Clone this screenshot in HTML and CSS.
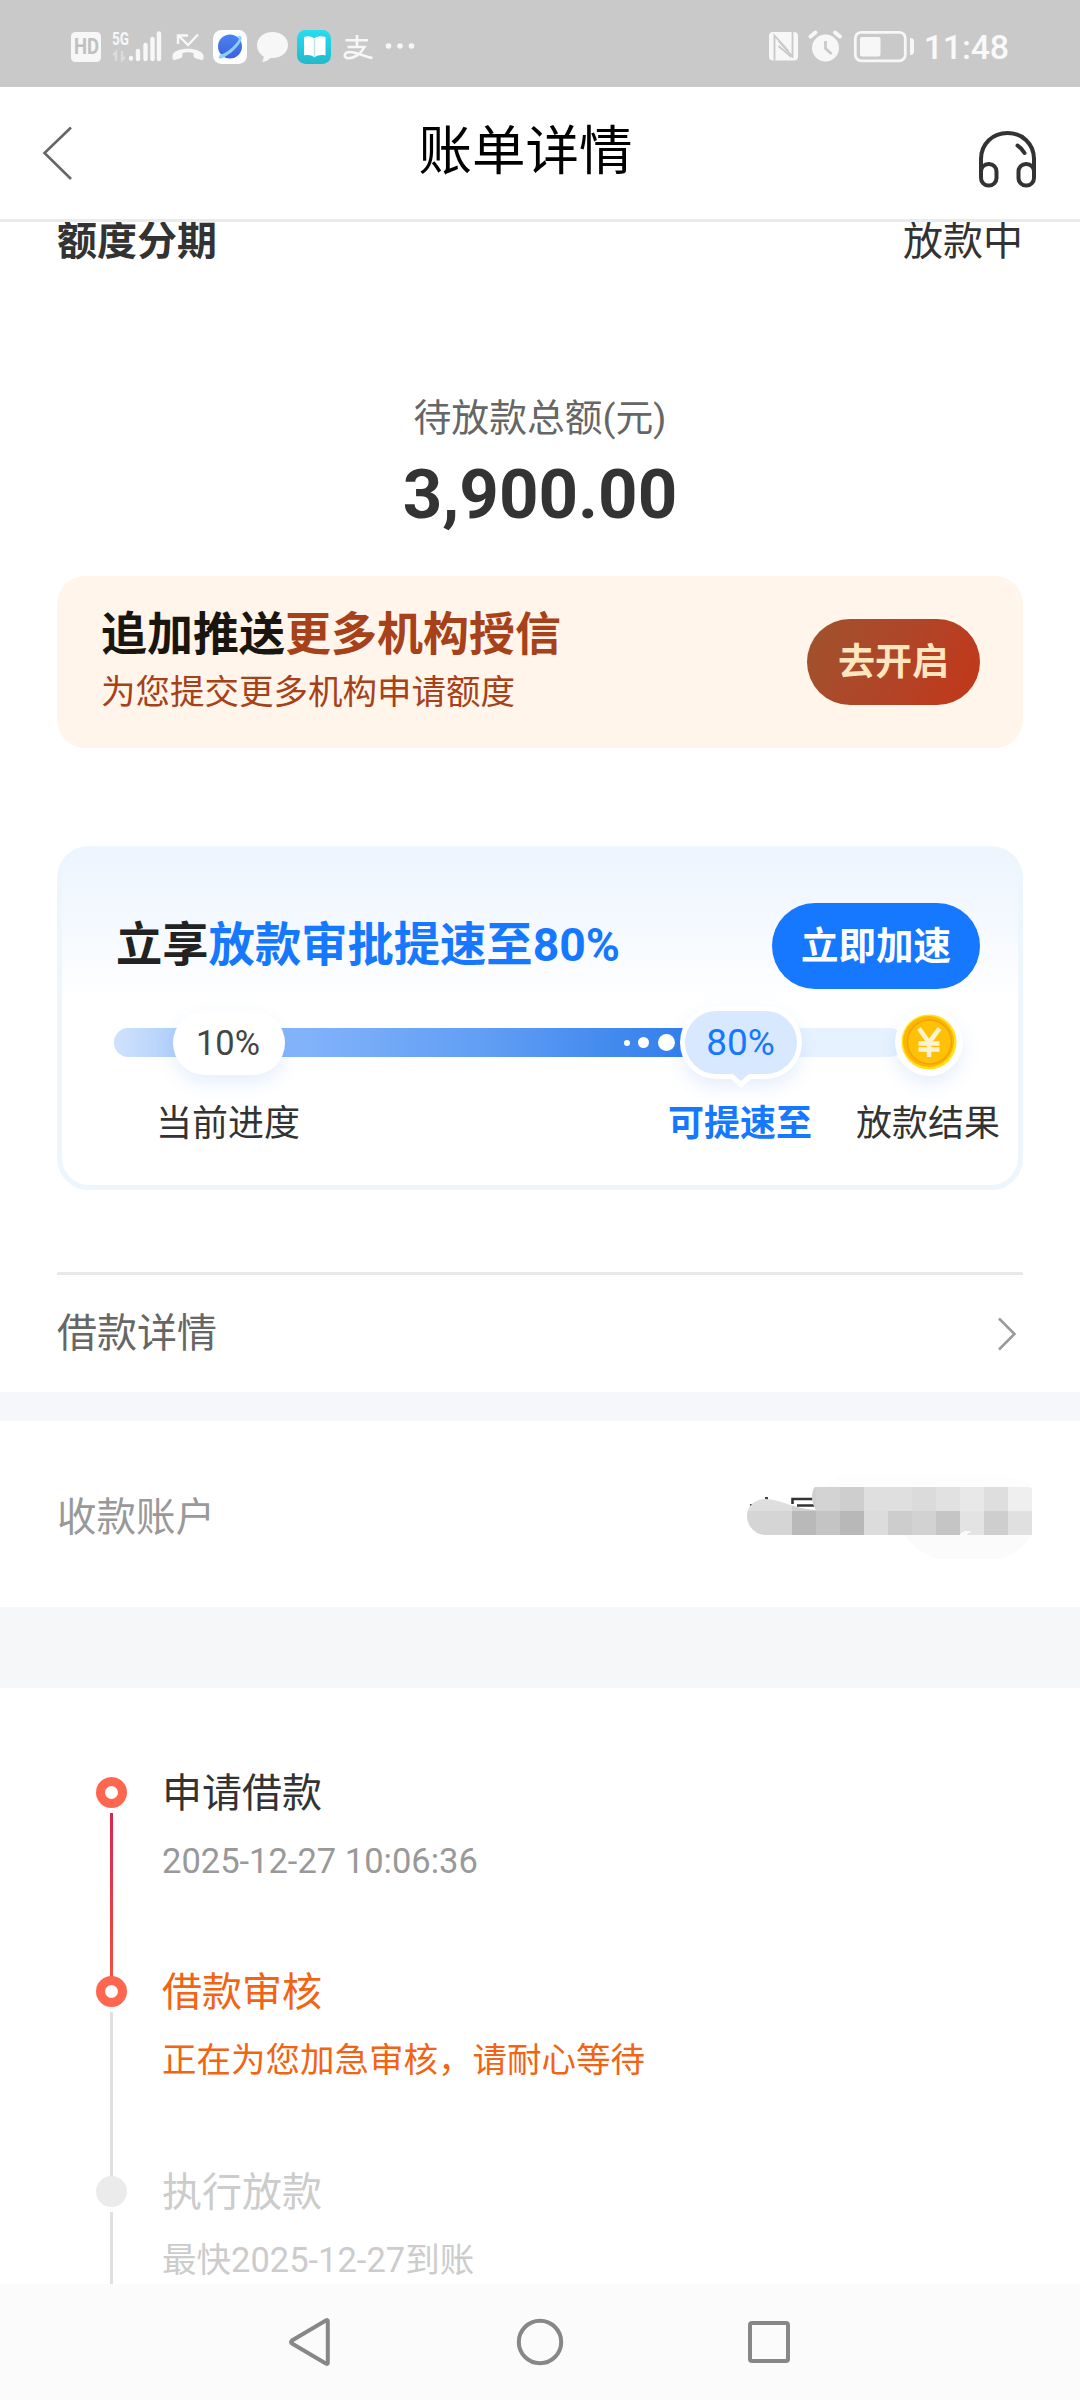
FILE: index.html
```html
<!DOCTYPE html>
<html lang="zh-CN">
<head>
<meta charset="utf-8">
<title>账单详情</title>
<link rel="stylesheet" href="styles.css">
</head>
<body>
<div class="screen">
  <div class="status-bar">
    <svg class="status-icons" width="350" height="87" viewBox="65 0 350 87">
      <rect x="71" y="32" width="30" height="30" rx="4.5" fill="#f7f7f7"/>
      <text class="hd" x="74" y="54" textLength="25" lengthAdjust="spacingAndGlyphs">HD</text>
      <text class="net" x="112" y="45" textLength="17" lengthAdjust="spacingAndGlyphs">5G</text>
      <g stroke="#dcdcdc" stroke-width="2.2" fill="none">
        <path d="M116 61V52l-3 3M122 51v9l3-3"/>
      </g>
      <g stroke="#f7f7f7" stroke-width="4.4" stroke-linecap="round">
        <path d="M131 58v.6M138 51v8M145.500 45v14M152.500 39v20M159 33.500v25.500"/>
      </g>
      <g fill="none" stroke="#f7f7f7" stroke-width="2.400">
        <path d="M178 44V35.500h10M179 36l9 9 10-10.500"/>
      </g>
      <path d="M172.500 55.500c1-9 29-9 31 0 .6 4.500-1 4.800-3 4.300l-5-1.500c-2-.7-2-2-2-5.300-3.500-1-7.500-1-11 0 0 3.300 0 4.600-2 5.300l-5 1.500c-2 .5-3.500.2-3-4.300z" fill="#f7f7f7"/>
      <rect x="213" y="30" width="34" height="34" rx="8.500" fill="#fff"/>
      <circle cx="230" cy="46.500" r="12" fill="url(#globe)"/>
      <path d="M221 54c-4 4.500-2.500 6 3 3.200 7-3.500 14-10.500 16.500-15.500 2.300-4.700 1-6.500-3.500-5.200 3 .2 2.500 3-1 7-5 5.800-10.500 9.500-13.500 10.500z" fill="#8bd0f7"/>
      <path d="M272.500 32c9 0 15.500 5.700 15.500 13s-6.500 13-15.500 13h-2c-2 2-5 3.700-8.500 4 1-1.500 1.800-3.500 1.600-5.500-4.200-2.500-6.600-6.800-6.600-11.500 0-7.300 6.500-13 15.500-13z" fill="#f7f7f7"/>
      <rect x="297" y="30" width="34" height="34" rx="8.500" fill="url(#book)"/>
      <path d="M304 37c4-1.500 7-1 10 1.500 3-2.500 7-3 11.500-1.500v18.500c-4-1-8-.5-11 2-3-2.500-7-3-10.500-2z" fill="#fff"/>
      <path d="M314.500 39v18" stroke="#b8e8ef" stroke-width="1.500"/>
      <g fill="none" stroke="#f7f7f7" stroke-width="2.600">
        <path d="M345.500 40.300h22.500M357 35v11.500M347.500 47h17c-3.500 6.500-10 11.300-16 11.300-5.500 0-5-6.300 1.500-6.300 7 0 14 4.500 22.500 6"/>
      </g>
      <g fill="#f7f7f7"><circle cx="388.500" cy="46" r="2.800"/><circle cx="400" cy="46" r="2.800"/><circle cx="411.500" cy="46" r="2.800"/></g>
      <defs>
        <linearGradient id="globe" x1="0" y1="0" x2="0" y2="1"><stop offset="0" stop-color="#4a83f0"/><stop offset="1" stop-color="#3f5fe0"/></linearGradient>
        <linearGradient id="book" x1="0" y1="0" x2="0" y2="1"><stop offset="0" stop-color="#27dcef"/><stop offset="1" stop-color="#22b9cc"/></linearGradient>
      </defs>
    </svg>
    <div class="status-right">
      <svg width="150" height="87" viewBox="768 0 150 87">
        <rect x="770" y="32" width="29" height="28.500" rx="4" fill="#f7f7f7"/>
        <path d="M775.500 60.500V35.500l14 15.500M793.500 32v24.500l-14-15.500" fill="none" stroke="#c9c9c9" stroke-width="1.800"/>
        <path d="M779.500 46l13 11" fill="none" stroke="#c9c9c9" stroke-width="1.800"/>
        <circle cx="826.500" cy="48" r="13.500" fill="#f7f7f7"/>
        <path d="M811.500 36.500l5-4M841 36.500l-5-4" stroke="#f7f7f7" stroke-width="4" stroke-linecap="round"/>
        <path d="M826.500 41v7.500l6 5.500" fill="none" stroke="#c9c9c9" stroke-width="2.800"/>
        <rect x="856.300" y="32.300" width="50" height="28.500" rx="6" fill="none" stroke="#f7f7f7" stroke-width="2.800"/>
        <rect x="861" y="37" width="20.500" height="19.500" rx="2" fill="#f7f7f7"/>
        <path d="M911 38c3 0 4 1 4 3.500v10c0 2.500-1 3.500-4 3.500z" fill="#f7f7f7"/>
      </svg>
      <span class="clock">11:48</span>
    </div>
  </div>

  <header class="nav-header">
    <svg class="back" width="36" height="60" viewBox="0 0 36 60"><path d="M29 5.500L2.500 31 29 57" fill="none" stroke="#666" stroke-width="2.600"/></svg>
    <h1 class="page-title">账单详情</h1>
    <svg class="service" width="60" height="60" viewBox="0 0 60 60" fill="none" stroke="#333" stroke-width="4">
      <path d="M3 36V29C3 13.500 15 3 29.500 3S56 13.500 56 29v7"/>
      <rect x="3" y="34" width="15.500" height="21.500" rx="7.500"/>
      <rect x="40.500" y="34" width="15.500" height="21.500" rx="7.500"/>
      <path d="M3 29v16M56 29v16M39.500 15.500q4 2.500 7 7.500" stroke-linecap="round"/>
    </svg>
  </header>

  <main class="content">
    <section class="summary">
      <div class="summary-row"><strong>额度分期</strong><span>放款中</span></div>
      <div class="amount-label">待放款总额(元)</div>
      <div class="amount">3,900.00</div>

      <div class="promo">
        <div class="promo-text">
          <div class="promo-title">追加推送<em>更多机构授信</em></div>
          <div class="promo-sub">为您提交更多机构申请额度</div>
        </div>
        <button class="promo-btn">去开启</button>
      </div>

      <div class="speed">
        <div class="speed-head">
          <div class="speed-title">立享<em>放款审批提速至80%</em></div>
          <button class="speed-btn">立即加速</button>
        </div>
        <div class="track">
          <div class="track-fill"><i class="dot dot-s"></i><i class="dot dot-m"></i><i class="dot dot-l"></i></div>
          <span class="badge badge-now">10%</span>
          <span class="badge badge-next">80%</span>
          <span class="coin">
            <svg width="56" height="56" viewBox="0 0 56 56">
              <circle cx="28" cy="28" r="27.500" fill="#ffe21a"/>
              <circle cx="27.500" cy="27.500" r="25.500" fill="#fdb504"/>
              <circle cx="28.500" cy="28" r="22" fill="#ffc107" stroke="#f3a203" stroke-width="1.500"/>
              <path d="M18 14.500l10 14 10.500-14M17.500 29.500h21M17.500 35.500h21M28 28v15" fill="none" stroke="#fff3cf" stroke-width="4.600"/>
            </svg>
          </span>
        </div>
        <div class="labels"><span>当前进度</span><b>可提速至</b><span>放款结果</span></div>
      </div>

      <div class="detail-row">
        <span>借款详情</span>
        <svg width="24" height="36" viewBox="0 0 24 36"><path d="M3 2.500L18.500 18 3 33.500" fill="none" stroke="#999" stroke-width="2.500"/></svg>
      </div>
    </section>

    <section class="account">
      <span>收款账户</span>
      <svg width="300" height="90" viewBox="740 1470 300 90">
        <path d="M840 1476h160l30 8v4H820z" fill="#fdfdfd"/>
        <path d="M905 1536h127q-15 22-34 24h-60q-20-5-33-24z" fill="#fbfbfb"/>
        <path d="M792.500 1505v-5H813M797 1506.500h18" stroke="#333" stroke-width="2.600" fill="none"/>
        <path d="M765 1498h3v4h-3zM750 1505h2v2h-2z" fill="#444"/>
        <clipPath id="smear"><path d="M766 1536c-11 0-19-9-19-19s8-17 19-17c14 0 30 11 50 11-5-8-5-18-1-23h214q3 0 3 4v44z"/></clipPath>
        <g clip-path="url(#smear)" shape-rendering="crispEdges">
          <path d="M744 1488h96v24h-96z" fill="#dedede"/>
          <path d="M792 1488h48v24h-48z" fill="#cfcfcf"/>
          <path d="M816 1488h24v24h-24z" fill="#d3d3d3"/>
          <path d="M840 1488h24v24h-24z" fill="#cecece"/>
          <path d="M864 1488h48v24h-48z" fill="#dfdfdf"/>
          <path d="M912 1488h24v24h-24z" fill="#dbdbdb"/>
          <path d="M936 1488h24v24h-24z" fill="#e1e1e1"/>
          <path d="M960 1488h24v24h-24z" fill="#e8e8e8"/>
          <path d="M984 1488h24v24h-24z" fill="#dedede"/>
          <path d="M1008 1488h24v24h-24z" fill="#efefef"/>
          <path d="M744 1512h48v24h-48z" fill="#d5d5d5"/>
          <path d="M792 1512h24v24h-24z" fill="#b9b9b9"/>
          <path d="M816 1512h24v24h-24z" fill="#c4c4c4"/>
          <path d="M840 1512h24v24h-24z" fill="#b8b8b8"/>
          <path d="M864 1512h24v24h-24z" fill="#dcdcdc"/>
          <path d="M888 1512h24v24h-24z" fill="#cdcdcd"/>
          <path d="M912 1512h24v24h-24z" fill="#d2d2d2"/>
          <path d="M936 1512h24v24h-24z" fill="#c5c5c5"/>
          <path d="M960 1512h24v24h-24z" fill="#e3e3e3"/>
          <path d="M984 1512h24v24h-24z" fill="#cecece"/>
          <path d="M1008 1512h24v24h-24z" fill="#e0e0e0"/>
          <path d="M959 1536q4-5 13-4l-6 4z" fill="#fafafa"/>
        </g>
      </svg>
    </section>

    <ol class="timeline">
      <li class="step done">
        <div class="rail"><i class="node"></i><i class="line"></i></div>
        <div class="step-body"><div class="step-title">申请借款</div><div class="step-note">2025-12-27 10:06:36</div></div>
      </li>
      <li class="step current">
        <div class="rail"><i class="node"></i><i class="line"></i></div>
        <div class="step-body"><div class="step-title">借款审核</div><div class="step-note">正在为您加急审核，请耐心等待</div></div>
      </li>
      <li class="step pending">
        <div class="rail"><i class="node"></i><i class="line"></i></div>
        <div class="step-body"><div class="step-title">执行放款</div><div class="step-note">最快2025-12-27到账</div></div>
      </li>
    </ol>
  </main>

  <nav class="system-nav">
    <svg width="50" height="50" viewBox="0 0 50 50"><path d="M42.800 4v42q0 1.500-2 .5L7 26.500q-2-1.500 0-3L40.800 3.500q2-1 2 .5z"/></svg>
    <svg width="50" height="50" viewBox="0 0 50 50"><circle cx="25" cy="25" r="21.200"/></svg>
    <svg width="50" height="50" viewBox="0 0 50 50"><rect x="5" y="6" width="38" height="38" rx="2"/></svg>
  </nav>
</div>
</body>
</html>
```
FILE: styles.css
```css
* { box-sizing: border-box; margin: 0; padding: 0; }
body { background: #fff; font-family: Roboto, "Noto Sans CJK SC", sans-serif; color: #333; }
em, i { font-style: normal; }
button { border: 0; font-family: inherit; }
svg { display: block; flex: none; }

.screen { width: 1080px; height: 2400px; display: flex; flex-direction: column; overflow: hidden; }

/* Status bar */
.status-bar { height: 87px; flex: none; background: #c9c9c9; display: flex; justify-content: space-between; padding: 0 71px 0 65px; }
.hd { font: 700 22px Roboto, sans-serif; fill: #c0c0c0; }
.net { font: 700 19px Roboto, sans-serif; fill: #f7f7f7; }
.status-right { display: flex; align-items: center; gap: 7px; }
.clock { font-size: 34px; font-weight: 500; line-height: 87px; color: #f9f9f9; padding-top: 8px; letter-spacing: -.2px; }

/* Title bar */
.nav-header { height: 135px; flex: none; border-bottom: 3px solid #ebebeb; display: grid; grid-template-columns: 100px 1fr 129px; align-items: center; }
.back { margin-left: 42px; margin-top: -3px; }
.page-title { font-size: 53.500px; font-weight: 400; line-height: 60px; text-align: center; color: #000; margin-top: -3px; }
.service { margin-left: 27px; margin-top: 14px; }

.content { flex: 1; min-height: 0; overflow: hidden; }

/* Summary */
.summary { height: 1170px; padding: 0 57px; display: flex; flex-direction: column; }
.summary-row { height: 40px; display: flex; justify-content: space-between; font-size: 40px; line-height: 40px; }
.amount-label { margin-top: 136px; height: 40px; line-height: 40px; font-size: 37.800px; text-align: center; color: #666; }
.amount { margin-top: 17px; height: 80px; line-height: 80px; font-size: 69px; font-weight: 700; text-align: center; }

.promo { margin-top: 41px; height: 172px; border-radius: 28px; background: #fff5ea; display: flex; align-items: center; justify-content: space-between; padding: 0 43px 0 44px; }
.promo-text { padding-bottom: 5px; }
.promo-title { font-size: 46px; font-weight: 700; line-height: 52px; color: #1b1510; }
.promo-title em { color: #a6411a; }
.promo-sub { margin-top: 12px; font-size: 34.500px; line-height: 40px; color: #a6411a; }
.promo-btn { width: 173px; height: 86px; padding-bottom: 7px; border-radius: 43px; background: linear-gradient(120deg, #a0522d 5%, #b04528 50%, #c0391c 90%); color: #ffe6bf; font-size: 37px; font-weight: 700; }

.speed { margin-top: 98px; height: 344px; border: 5px solid #edf5fd; border-radius: 32px; background: linear-gradient(#edf5ff, #f5f9ff 22%, #fff 46%); padding: 52px 38px 0 54px; }
.speed-head { height: 86px; display: flex; align-items: center; justify-content: space-between; }
.speed-title { font-size: 46.300px; font-weight: 700; line-height: 52px; color: #222; padding-bottom: 3px; }
.speed-title em { color: #1677ff; }
.speed-btn { width: 208px; height: 86px; padding-bottom: 8px; border-radius: 43px; background: #1677ff; color: #fff; font-size: 37.500px; font-weight: 700; }

.track { position: relative; margin-top: 39px; margin-left: -2px; width: 790px; height: 29px; border-radius: 15px; background: #e6f2ff; }
.track-fill { width: 581px; height: 29px; border-radius: 15px 0 0 15px; background: linear-gradient(90deg, #cfe2fc, #8ab8fb 25%, #5f9df4 65%, #2f7deb); display: flex; align-items: center; justify-content: flex-end; padding-right: 20px; }
.dot { border-radius: 50%; background: #fff; }
.dot-s { width: 6px; height: 6px; margin-right: 8px; }
.dot-m { width: 11px; height: 11px; margin-right: 9px; }
.dot-l { width: 17px; height: 17px; }
.badge { position: absolute; text-align: center; }
.badge-now { left: 59px; top: -17px; width: 112px; height: 64px; padding-right: 2px; font-size: 34.500px; line-height: 64px; border-radius: 32px; background: #fff; color: #444; box-shadow: 0 8px 18px rgba(60, 120, 240, .13); }
.badge-next { left: 566px; top: -22px; width: 122px; height: 73px; padding-right: 1px; font-size: 37px; line-height: 64px; border: 5px solid #fff; border-radius: 37px; background: #d8e8fe; color: #1677ff; box-shadow: 0 8px 18px rgba(60, 120, 240, .13); }
.badge-next::before { content: ""; position: absolute; left: 46px; bottom: -14px; border: 10px solid transparent; border-top: 9px solid #fff; border-bottom: 0; }
.badge-next::after { content: ""; position: absolute; left: 47px; bottom: -7px; border: 9px solid transparent; border-top: 8px solid #d8e8fe; border-bottom: 0; }
.coin { position: absolute; left: 781px; top: -20px; padding: 6px; border-radius: 50%; background: #fff; box-shadow: 0 8px 18px rgba(60, 120, 240, .13); }

.labels { margin-top: 46px; margin-right: -20px; padding-left: 40px; display: flex; font-size: 36px; line-height: 42px; color: #333; }
.labels b { margin-left: 368px; font-weight: 700; color: #1677ff; }
.labels b + span { margin-left: auto; }

.detail-row { margin-top: 82px; height: 120px; border-top: 3px solid #e8e8e8; display: flex; align-items: center; justify-content: space-between; font-size: 40px; color: #666; padding-right: 3px; }
.detail-row span { padding-bottom: 7px; }

/* Receiving account */
.account { height: 296px; border-top: 29px solid #f6f7fa; border-bottom: 81px solid #f6f7f9; padding: 0 40px 0 57px; display: flex; align-items: center; justify-content: space-between; font-size: 39.500px; color: #999; }
.account span { padding-bottom: 2px; }

/* Timeline */
.timeline { list-style: none; padding: 83px 0 0 96px; }
.step { display: flex; height: 199.300px; }
.rail { width: 31px; display: flex; flex-direction: column; align-items: center; padding-top: 6px; }
.node { width: 31px; height: 31px; flex: none; border-radius: 50%; border: 9px solid #ff6650; background: #fff; }
.line { width: 3px; margin-top: 5px; flex: 1; margin-bottom: -7px; background: #e0e0e0; }
.done .line { background: linear-gradient(#dc2450, #f05040); }
.pending .node { border-color: #ebebeb; background: #ebebeb; }
.step-body { padding-left: 35px; }
.step-title { font-size: 40px; line-height: 46px; }
.step-note { margin-top: 24px; font-size: 34.500px; line-height: 40px; color: #999; }
.current .step-title, .current .step-note { color: #f26414; }
.pending .step-title, .pending .step-note { color: #ccc; }

/* Android navigation */
.system-nav { height: 116px; flex: none; background: #fbfbfb; display: flex; justify-content: center; align-items: center; gap: 180px; }
.system-nav svg { fill: none; stroke: #878787; stroke-width: 4; }
```
